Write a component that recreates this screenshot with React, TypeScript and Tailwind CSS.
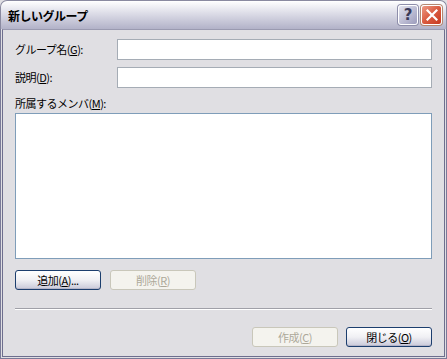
const font = { fontFamily: '"Noto Sans CJK JP", "Noto Sans", sans-serif' };

function U({ children }: { children: string }) {
  return <span className="underline underline-offset-[1px]">{children}</span>;
}

function XpButton({
  children,
  disabled,
}: {
  children: React.ReactNode;
  disabled?: boolean;
}) {
  if (disabled) {
    return (
      <div className="w-[86px] h-[20px] rounded-[3px] border border-[#c9c7ba] bg-[#f4f3ee] text-[#aca899] flex items-center justify-center text-[11px] tracking-[-0.5px] leading-none">
        {children}
      </div>
    );
  }
  return (
    <div className="w-[86px] h-[20px] rounded-[3px] border border-[#1c3e6e] bg-gradient-to-b from-[#ffffff] via-[#f0f0f4] to-[#c9c9d9] text-black flex items-center justify-center text-[11px] tracking-[-0.5px] leading-none shadow-[inset_0_-1px_0_#b5b5c8]">
      {children}
    </div>
  );
}

export default function App() {
  return (
    <div
      className="w-[447px] h-[359px] bg-[#e0dfe3] flex flex-col overflow-hidden"
      style={font}
    >
      {/* title bar */}
      <div className="h-[29px] shrink-0 rounded-t-[7px] border border-b-0 border-[#8a8aa0] bg-gradient-to-b from-[#ffffff] via-[#d8d8e4] to-[#b2b2c8] flex items-center pl-[7px] pr-[4px] shadow-[inset_0_1px_0_#ffffff]">
        <div className="text-[12px] font-bold tracking-[-0.5px] text-black flex-1 leading-none pt-[1px]">
          新しいグループ
        </div>
        <div className="flex gap-[3px] items-center">
          <div className="w-[20px] h-[20px] rounded-[3px] border border-white bg-gradient-to-br from-[#e4e4ef] to-[#9c9cbc] flex items-center justify-center shadow-[0_0_0_1px_#8e8eaa]">
            <span className="text-[15px] font-bold text-[#3a3a5a] leading-none" style={{ fontFamily: '"DejaVu Sans", sans-serif' }}>?</span>
          </div>
          <div className="w-[21px] h-[20px] rounded-[3px] border border-white bg-gradient-to-br from-[#ec9a84] via-[#d95a3f] to-[#c8391f] flex items-center justify-center shadow-[0_0_0_1px_#b5886f]">
            <svg width="12" height="12" viewBox="0 0 12 12">
              <path d="M1.5 1.5 L10.5 10.5 M10.5 1.5 L1.5 10.5" stroke="#ffffff" strokeWidth="2.2" strokeLinecap="square" />
            </svg>
          </div>
        </div>
      </div>

      {/* window frame: outer line, light band, inner line */}
      <div className="flex-1 flex flex-col border-x border-b border-[#7a7a98] px-[1px] pb-[1px] bg-[#e0dfe3]">
        <div className="flex-1 flex flex-col border-x border-b border-t border-x-[#6e6e8e] border-b-[#6e6e8e] border-t-[#9a9ab0]">
          <div className="flex-1 pl-[12px] pr-[12px] pt-[9px] flex flex-col text-[11px] tracking-[-0.5px] text-black">
            <div className="flex items-center h-[21px]">
              <div className="w-[102px]">
                グループ名(<U>G</U>):
              </div>
              <div className="flex-1 h-[21px] bg-white border border-[#a5acb5]" />
            </div>
            <div className="flex items-center h-[21px] mt-[7px]">
              <div className="w-[102px]">
                説明(<U>D</U>):
              </div>
              <div className="flex-1 h-[21px] bg-white border border-[#a5acb5]" />
            </div>
            <div className="mt-[8px] h-[14px] leading-[14px]">
              所属するメンバ(<U>M</U>):
            </div>
            <div className="mt-[3px] h-[146px] bg-white border border-[#7f9db9]" />
            <div className="mt-[11px] flex gap-[9px]">
              <XpButton>
                追加(<U>A</U>)...
              </XpButton>
              <XpButton disabled>
                削除(<U>R</U>)
              </XpButton>
            </div>
            <div className="mt-[18px] h-[2px] border-t border-[#a0a0a8] border-b border-b-white" />
            <div className="mt-[17px] flex justify-end gap-[8px]">
              <XpButton disabled>
                作成(<U>C</U>)
              </XpButton>
              <XpButton>
                閉じる(<U>O</U>)
              </XpButton>
            </div>
          </div>
        </div>
      </div>
    </div>
  );
}
